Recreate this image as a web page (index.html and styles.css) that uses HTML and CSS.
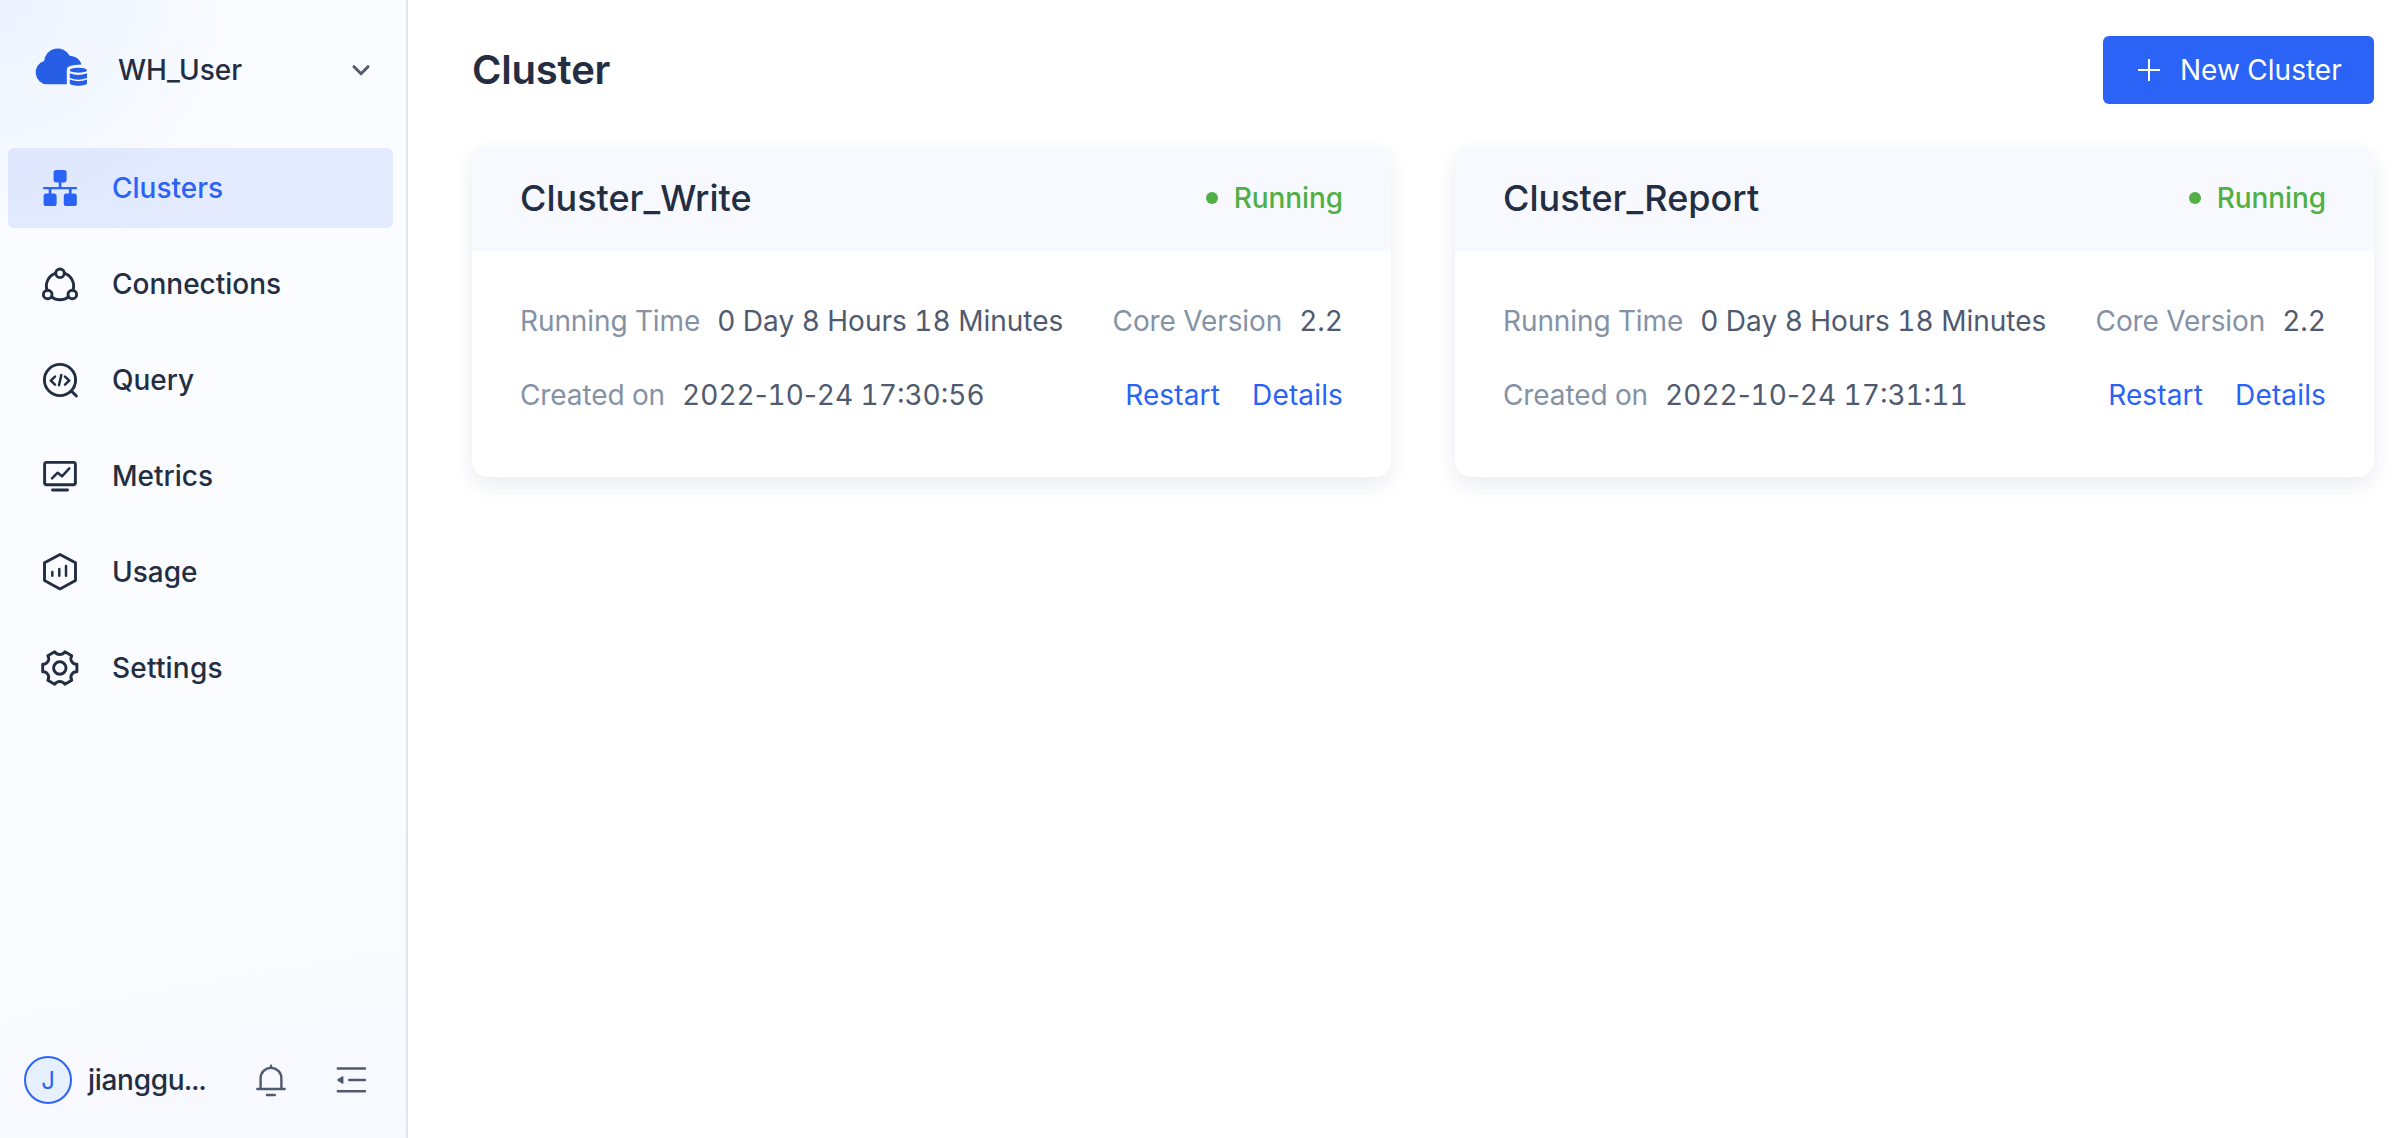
FILE: index.html
```html
<!DOCTYPE html>
<html lang="en">
<head>
<meta charset="utf-8">
<title>Cluster</title>
<link rel="stylesheet" href="styles.css">
</head>
<body>
<div class="app">
  <aside class="sidebar">
    <div class="warehouse">
      <svg class="logo" viewBox="0 0 54 40">
        <path fill="#265fe5" d="M13 38.300A11.900 11.900 0 0 1 10.200 15A13.500 13.500 0 0 1 35.700 9.800A13.500 13.500 0 0 1 47.600 18.400Q40 18.600 36 20Q32.800 21.200 32.800 24V38.300Z"/>
        <path fill="#265fe5" d="M35.800 24.300c0-3.400 17.200-3.400 17.200 0c0 3.200-17.200 3.200-17.200 0ZM35.800 27.200q8.600 3.400 17.200 0v4.700q-8.600 3.600-17.200 0ZM35.800 33.600q8.600 3.400 17.200 0v3.400c0 3.600-17.200 3.600-17.200 0Z"/>
      </svg>
      <span class="warehouse-name">WH_User</span>
      <svg class="chevron" viewBox="0 0 20 14"><path d="M3 3.700l7 7 7-7"/></svg>
    </div>
    <nav class="nav">
      <a class="nav-item active"><svg class="icon solid" viewBox="0 0 36 36"><rect x="11.600" y="0" width="13" height="12.400" rx="2.600"/><rect x="1.600" y="23.400" width="13" height="12.600" rx="2.600"/><rect x="21.800" y="23.400" width="13" height="12.600" rx="2.600"/><path d="M16.700 12h2.700v4.900h14.800q.9 0 .9 1.200t-.9 1.200H29.600V24H26.900V19.300H9.400V24H6.700V19.300H1.900q-.9 0-.9-1.200T1.900 16.900H16.700Z"/></svg><span>Clusters</span></a>
      <a class="nav-item"><svg class="icon" viewBox="0 0 36 36"><circle cx="18" cy="7.300" r="4.300"/><circle cx="5.700" cy="28.500" r="4.300"/><circle cx="30.300" cy="28.500" r="4.300"/><path d="M22.200 7.200A13.600 13.600 0 0 1 31 24.200M26.500 30.800A13.600 13.600 0 0 1 9.500 30.800M5 24.200A13.600 13.600 0 0 1 13.800 7.200"/></svg><span>Connections</span></a>
      <a class="nav-item"><svg class="icon" viewBox="0 0 36 36"><circle cx="18" cy="18" r="15.600"/><path d="M29.900 29.600l4.500 4.400"/><path class="thin" d="M13 14.700l-4.300 4 4.300 4M19.300 12.900L17 23.300M23 14.700l4.300 4-4.300 4"/></svg><span>Query</span></a>
      <a class="nav-item"><svg class="icon" viewBox="0 0 36 36"><rect x="2.600" y="4.400" width="30.800" height="22.300" rx="2"/><path d="M10.500 32H25.500"/><path class="thin" d="M10 20.300l5.700-5.600 4.300 3.600 7.300-8"/></svg><span>Metrics</span></a>
      <a class="nav-item"><svg class="icon" viewBox="0 0 36 36"><path d="M18 .4L33.500 8.800V26.500L18 34.900 2.500 26.500V8.800Z"/><path class="thin" d="M10.300 17.900v3.800M17.300 15v6.700M24 12v9.700"/></svg><span>Usage</span></a>
      <a class="nav-item"><svg class="icon" viewBox="0 0 36 36"><circle cx="17.800" cy="18" r="6.200"/><path d="M34.900 14.200V21.800A5.500 5.500 0 0 0 29.800 30.300L22.900 34.300A6 6 0 0 0 12.700 34.300L5.800 30.300A5.500 5.500 0 0 0 .7 21.800V14.200A5.500 5.500 0 0 0 5.800 5.700L12.700 1.700A6 6 0 0 0 22.900 1.700L29.800 5.700A5.500 5.500 0 0 0 34.900 14.200Z"/></svg><span class="wide">Settings</span></a>
    </nav>
    <div class="account">
      <span class="avatar">J</span>
      <span class="user">jianggu...</span>
      <svg class="tool bell" viewBox="0 0 32 34"><path d="M5.600 26V15.300a10.400 10.400 0 0 1 20.800 0V26M2.300 26H29.700M12 32h7.800M16 4V2.600"/></svg>
      <svg class="tool fold" viewBox="0 0 32 34"><path d="M2.800 5.500H30M14.200 17H30M2.800 28.300H30"/><path class="arrow" d="M3 17l4.700-3v6Z"/></svg>
    </div>
  </aside>
  <main class="main">
    <header class="page-head">
      <h1>Cluster</h1>
      <button class="new"><svg class="plus" viewBox="0 0 22 22"><path d="M0 11H22M11 0V22"/></svg><span>New Cluster</span></button>
    </header>
    <section class="cards">
      <article class="card">
        <div class="card-head"><h2>Cluster_Write</h2><span class="status">Running</span></div>
        <div class="card-body">
          <div class="row"><span><span class="label">Running Time</span><span class="value">0 Day 8 Hours 18 Minutes</span></span><span><span class="label">Core Version</span><span class="value">2.2</span></span></div>
          <div class="row"><span><span class="label">Created on</span><span class="value">2022<span class="sep">-</span>10<span class="sep">-</span>24 17:30:56</span></span><span class="links"><a>Restart</a><a>Details</a></span></div>
        </div>
      </article>
      <article class="card">
        <div class="card-head"><h2>Cluster_Report</h2><span class="status">Running</span></div>
        <div class="card-body">
          <div class="row"><span><span class="label">Running Time</span><span class="value">0 Day 8 Hours 18 Minutes</span></span><span><span class="label">Core Version</span><span class="value">2.2</span></span></div>
          <div class="row"><span><span class="label">Created on</span><span class="value">2022<span class="sep">-</span>10<span class="sep">-</span>24 17:31:11</span></span><span class="links"><a>Restart</a><a>Details</a></span></div>
        </div>
      </article>
    </section>
  </main>
</div>
</body>
</html>
```
FILE: styles.css
```css
* { box-sizing: border-box; }
body { margin: 0; font-family: Inter, "Liberation Sans", sans-serif; font-size: 28px; color: #242e42; background: #fff; font-variant-numeric: tabular-nums; }
h1, h2 { margin: 0; }
svg { display: block; flex: none; overflow: visible; }
.app { display: flex; height: 1138px; }
.sidebar {
  width: 408px; flex: none; display: flex; flex-direction: column;
  border-right: 2px solid #e0e4f2;
  background:
    radial-gradient(circle at 0 0, #edf4ff 0, rgba(237, 244, 255, 0) 280px),
    linear-gradient(170deg, #fbfcff 0, #fbfcff 60%, #f8f9fe 100%);
}
.warehouse { display: flex; align-items: center; height: 140px; padding: 0 35px; }
.logo { width: 54px; height: 40px; margin: -8px 0 0 -1px; }
.warehouse-name { flex: 1; margin-left: 30px; font-weight: 500; }
.chevron { width: 20px; height: 14px; fill: none; stroke: #4f5a70; stroke-width: 3; stroke-linecap: round; }
.nav { display: flex; flex-direction: column; gap: 16px; padding: 8px 13px 0 8px; }
.nav-item { display: flex; align-items: center; gap: 34px; height: 80px; padding-left: 34px; border-radius: 6px; font-weight: 500; }
.active { color: #2a63f5; background: rgba(41, 98, 245, .11); }
.icon { width: 36px; height: 36px; fill: none; stroke: currentColor; stroke-width: 2.9; stroke-linecap: round; stroke-linejoin: round; }
.icon.solid { fill: currentColor; stroke: none; }
.icon .thin { stroke-width: 2.5; }
.wide { letter-spacing: .2px; }
.account { display: flex; align-items: center; height: 48px; margin: auto 0 34px; padding-left: 24px; }
.avatar { width: 48px; height: 48px; border: 2px solid #2a63f5; border-radius: 50%; background: #e6f0ff; color: #2a63f5; font-size: 24px; line-height: 45px; text-align: center; }
.user { width: 120px; margin-left: 16px; font-weight: 500; letter-spacing: -.3px; }
.tool { width: 32px; height: 34px; fill: none; stroke: #4f5a70; stroke-width: 2.4; stroke-linecap: round; stroke-linejoin: round; }
.arrow { fill: #4f5a70; stroke-width: 1.5; }
.bell { margin-left: 47px; }
.fold { margin-left: 48px; }
.main { flex: 1; padding: 36px 26px 0 64px; }
.page-head { display: flex; align-items: center; justify-content: space-between; height: 68px; }
h1 { padding-bottom: 2px; font-size: 40px; font-weight: 600; letter-spacing: -.2px; }
.new { display: flex; align-items: center; gap: 20px; width: 271px; height: 68px; padding: 0 0 0 35px; border: 0; border-radius: 6px; background: #2a63f5; color: #fff; font: inherit; white-space: nowrap; }
.plus { width: 22px; height: 22px; stroke: #fff; stroke-width: 2; }
.cards { display: grid; grid-template-columns: 1fr 1fr; gap: 64px; margin-top: 42px; }
.card { height: 331px; border-radius: 16px; background: #fff; box-shadow: 0 8px 20px rgba(36, 46, 90, .09); overflow: hidden; }
.card-head { display: flex; align-items: center; justify-content: space-between; height: 105px; padding: 0 48px 1px; background: #f8f9ff; }
h2 { padding-bottom: 1px; font-size: 36px; font-weight: 500; }
.status { display: flex; align-items: center; gap: 16px; color: #50b044; font-weight: 500; letter-spacing: -.1px; }
.status::before { content: ""; width: 12px; height: 12px; border-radius: 50%; background: currentColor; }
.card-body { display: flex; flex-direction: column; gap: 30px; padding: 48px 48px 0; }
.row { display: flex; justify-content: space-between; height: 44px; line-height: 44px; white-space: nowrap; }
.label { color: #8592a6; margin-right: 17px; letter-spacing: -.1px; }
.value { color: #4f5a70; }
.sep { font-variant-numeric: normal; }
.links { display: flex; gap: 32px; color: #2a63f5; letter-spacing: .15px; }
```
